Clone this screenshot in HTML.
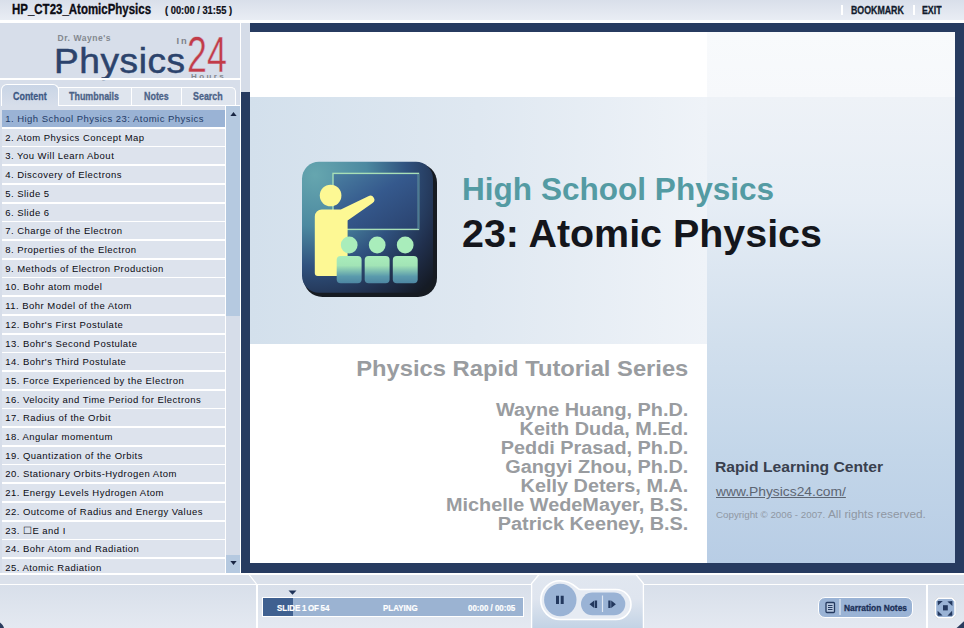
<!DOCTYPE html>
<html><head><meta charset="utf-8"><title>HP_CT23_AtomicPhysics</title>
<style>
html,body{margin:0;padding:0}
body{width:964px;height:628px;overflow:hidden;position:relative;background:#d7deea;font-family:"Liberation Sans",sans-serif;}
div,span,svg{position:absolute;box-sizing:border-box}
.nar{display:inline-block;transform-origin:0 50%;white-space:nowrap;font-weight:bold}
#topbar{left:0;top:0;width:964px;height:20px;background:linear-gradient(#d9dfea,#e9edf4)}
#topline{left:0;top:20px;width:964px;height:3px;background:#fff}
#title{left:12px;top:2px;font-size:13.8px;color:#0c0c14;transform:scaleX(.832);-webkit-text-stroke:.3px #0c0c14}
#time{left:165px;top:3.5px;font-size:11px;color:#0c0c14;transform:scaleX(.85);-webkit-text-stroke:.2px #0c0c14}
#bm{left:851px;top:4px;font-size:11px;color:#111a2c;transform:scaleX(.8);-webkit-text-stroke:.3px #111a2c}
#ex{left:922px;top:4px;font-size:11px;color:#111a2c;transform:scaleX(.8);-webkit-text-stroke:.3px #111a2c}
.vsep{width:2px;height:10px;top:5px;background:#fff}
/* sidebar */
#side{left:0;top:23px;width:240px;height:550px;background:#d7deea}
#sideR{left:240px;top:23px;width:1px;height:550px;background:#fff}
#strip{left:241px;top:23px;width:8.5px;height:69px;background:#d5dce8}
#logoline{left:0;top:78px;width:240px;height:2px;background:#fff}
/* logo */
#lg1{left:57.5px;top:32.5px;font-size:8.5px;font-weight:bold;color:#83888f;letter-spacing:.55px;white-space:nowrap}
#lg2{left:54.3px;top:41.1px;font-size:34.2px;color:#2c436c;letter-spacing:.5px;white-space:nowrap;line-height:40px;-webkit-text-stroke:.5px #2c436c;transform:scaleX(1.085);transform-origin:0 50%}
#lg3{left:176.6px;top:35.5px;font-size:9.3px;font-weight:bold;color:#7d828a;letter-spacing:1.7px}
#lg4{left:187.4px;top:29.3px;font-size:50.5px;color:#c23c48;line-height:52px;transform:scaleX(.71);transform-origin:0 50%;white-space:nowrap;-webkit-text-stroke:.45px #d7deea}
#lg5{left:191px;top:72.2px;font-size:8px;font-weight:bold;color:#83888f;letter-spacing:2.4px;height:5.8px;overflow:hidden;line-height:10px;white-space:nowrap}
/* tabs */
.tab{top:87px;height:18px;border:1px solid #fff;border-bottom:0;background:#dfe5ee}
.tab span{top:2px;font-size:11px;color:#4b6288;transform:scaleX(.81);-webkit-text-stroke:.3px #4b6288}
#tab1{left:1px;top:84px;width:58px;height:22px;border-radius:6px 6px 0 0;background:linear-gradient(#c9d5e6,#d7deea);z-index:2}
#tab1 span{top:5px;left:11px;color:#3c5884;-webkit-text-stroke:.3px #3c5884}
#tab2{left:58px;width:74px}
#tab3{left:131px;width:51px}
#tab4{left:181px;width:55px;border-radius:0 5px 0 0}
/* frame */
#frame{left:241px;top:23px;width:723px;height:550px;background:#273b60}
#slide{left:249.5px;top:32px;width:705.5px;height:531.2px;background:#fff;overflow:hidden}
/* list */
.row{left:2px;width:223px;height:17px;background:#dde3ed;font-size:9.5px;letter-spacing:.47px;color:#0a0a12;white-space:nowrap;overflow:hidden}
.row span{left:3.2px;top:3px;line-height:11px}
.row.sel{background:#9ab3d5;color:#1f3a66}
#listbg{left:2px;top:106px;width:223px;height:467px;background:#fff}
#listtop{left:2px;top:106px;width:223px;height:4px;background:#d7deea}
#hline105{left:59px;top:105px;width:182px;height:1px;background:#fff}
#vline225{left:225px;top:105px;width:1px;height:468px;background:#fff}
#sb{left:226px;top:106px;width:14px;height:467px;background:#d6dde9}
#sbt{left:226px;top:106px;width:14px;height:209.5px;background:#b5c9e0}
#sbd{left:226px;top:555px;width:14px;height:18px;background:#b5c9e0}
#sbu1{left:229px;top:110px}
#sbd1{left:229px;top:559px}
/* slide */
#band{left:0;top:65px;width:457.5px;height:247px;background:linear-gradient(90deg,#d3e0ec,#dfe8f1 50%,#eff3f8)}
#rcol{left:457.5px;top:0;width:248px;height:531px;background:linear-gradient(#f8fafc 0,#f6f8fb 65px,#eef2f7 65px,#e6edf5 170px,#d1dfed 313px,#c3d6e9 420px,#b8cde5 531px)}
#rcolw{left:457.5px;top:313px;width:248px;height:218px;background:#fff}
#t1{left:212px;top:140px;font-size:31px;font-weight:bold;color:#549ba3;white-space:nowrap;line-height:36px;transform:scaleX(1.018);transform-origin:0 50%}
#t2{left:212px;top:180px;font-size:38px;font-weight:bold;color:#14161c;white-space:nowrap;line-height:44px;transform:scaleX(1.037);transform-origin:0 50%}
#t3{right:267px;top:324px;font-size:22.2px;font-weight:bold;color:#999ca0;white-space:nowrap;line-height:26px;transform:scaleX(1.07);transform-origin:100% 50%}
#names{right:267px;top:367.5px;font-size:18.8px;font-weight:bold;color:#999ca0;white-space:nowrap;line-height:19px;text-align:right;transform:scaleX(1.057);transform-origin:100% 50%}
#r1{left:465.5px;top:426px;font-size:15px;font-weight:bold;color:#39404e;white-space:nowrap;line-height:18px;transform:scaleX(1.045);transform-origin:0 50%}
#r2{left:466px;top:452px;font-size:13.3px;color:#5d6673;white-space:nowrap;line-height:16px;text-decoration:underline;transform:scaleX(1.04);transform-origin:0 50%}
#r3{left:466px;top:475px;font-size:9.5px;color:#8f97a3;white-space:nowrap;line-height:14px;transform:scaleX(1.028);transform-origin:0 50%}
#r3 b{font-weight:normal;font-size:11.5px}
/* bottom */
#bline1{left:0;top:573px;width:964px;height:2px;background:#fff}
#bline2{left:0;top:584px;width:964px;height:1px;background:#fff}
#bband{left:0;top:575px;width:964px;height:10px;background:#dbe1eb}
#bpanel{left:0;top:585px;width:964px;height:43px;background:linear-gradient(#d8dfea,#e4e9f1)}
#bv1{left:256px;top:584px;width:1.6px;height:44px;background:#fff}
#bv2{left:926px;top:585px;width:2px;height:43px;background:#fff}
#pbar{left:262px;top:597px;width:262px;height:20px;border:1px solid #fff;background:#9bb3d2}
#pdone{left:0;top:0;width:30px;height:18px;background:#3f6090}
.pt{top:4px;font-size:9.7px;color:#fff;transform:scaleX(.82);-webkit-text-stroke:.2px #fff}
#nn{left:818px;top:597px;width:95px;height:21px;border:1.5px solid #fff;border-radius:7px;background:#9ab3d5}
#nn span{left:24.5px;top:4px;font-size:9.6px;color:#1a2f57;transform:scaleX(.875);-webkit-text-stroke:.3px #1a2f57}

#ctl{left:525px;top:570px}
#diag{left:246px;top:572px}
#mark{left:287px;top:589px}
#fs{left:932px;top:595px}
#nnicon{left:6px;top:3px}
#nnsep{left:20px;top:1px;width:1.5px;height:16px;background:#c5d3e6}
#grip{left:952px;top:616px}
#gripl{left:0;top:616px}

</style></head><body>
<div id="topbar"></div><div id="topline"></div>
<span id="title" class="nar">HP_CT23_AtomicPhysics</span>
<span id="time" class="nar">( 00:00 / 31:55 )</span>
<div class="vsep" style="left:841px"></div><div class="vsep" style="left:913px"></div>
<span id="bm" class="nar">BOOKMARK</span><span id="ex" class="nar">EXIT</span>

<div id="frame"></div>
<div id="strip"></div>
<div id="slide">
 <div id="band"></div>
 <div id="rcolw"></div>
 <div id="rcol"></div>
 <svg id="icon" style="left:49px;top:127px" width="140" height="140" viewBox="0 0 140 140">
  <defs>
   <radialGradient id="ig" cx=".1" cy=".1" r="1.2" gradientUnits="objectBoundingBox"><stop offset="0" stop-color="#66a6af"/><stop offset=".33" stop-color="#4c89a0"/><stop offset=".58" stop-color="#30527f"/><stop offset=".82" stop-color="#202f4c"/><stop offset="1" stop-color="#151b25"/></radialGradient>
   <linearGradient id="sg" x1="0" y1="0" x2="0" y2="1"><stop offset="0" stop-color="#a9edbb"/><stop offset=".35" stop-color="#a2e4b6"/><stop offset=".75" stop-color="#5a9aac"/><stop offset="1" stop-color="#4d86a2"/></linearGradient>
   <linearGradient id="bg" x1="0" y1="0" x2="1" y2="1"><stop offset="0" stop-color="#4a7fa0"/><stop offset=".45" stop-color="#35598d"/><stop offset="1" stop-color="#2a426e"/></linearGradient>
  </defs>
  <rect x="4.5" y="4.5" width="133.5" height="133.5" rx="19" fill="#161b22"/>
  <rect x="3" y="2.7" width="131" height="131" rx="17" fill="url(#ig)"/>
  <rect x="34" y="14.4" width="85.5" height="56" fill="url(#bg)" stroke="#a8dfb7" stroke-width="1.4"/>
  <path d="M119.5 15V70" stroke="#4c7a94" stroke-width="1.6"/>
  <circle cx="31.6" cy="36.5" r="10.8" fill="#fdf894"/>
  <path d="M15.8 114V57.5a7 7 0 0 1 7-7h19l27.5-13.3a4 4 0 0 1 4 7L48.6 61.5v52.5a3 3 0 0 1-3 3H18.8a3 3 0 0 1-3-3z" fill="#fdf894"/>
  <g fill="#a9edbb"><circle cx="50.2" cy="86" r="8.4"/><circle cx="78.2" cy="86" r="8.4"/><circle cx="106.2" cy="86" r="8.4"/></g>
  <g fill="url(#sg)"><rect x="37.7" y="96.9" width="24.9" height="27.4" rx="4"/><rect x="65.7" y="96.9" width="24.9" height="27.4" rx="4"/><rect x="93.8" y="96.9" width="24.9" height="27.4" rx="4"/></g>
 </svg>
 <span id="t1">High School Physics</span>
 <span id="t2">23: Atomic Physics</span>
 <span id="t3">Physics Rapid Tutorial Series</span>
 <div id="names">Wayne Huang, Ph.D.<br>Keith Duda, M.Ed.<br>Peddi Prasad, Ph.D.<br>Gangyi Zhou, Ph.D.<br>Kelly Deters, M.A.<br>Michelle WedeMayer, B.S.<br>Patrick Keeney, B.S.</div>
 <span id="r1">Rapid Learning Center</span>
 <span id="r2">www.Physics24.com/</span>
 <span id="r3">Copyright © 2006 - 2007. <b>All rights reserved.</b></span>
</div>

<div id="side"></div><div id="sideR"></div>
<span id="lg1">Dr. Wayne's</span>
<span id="lg2">Physics</span>
<span id="lg3">In</span>
<span id="lg4">24</span>
<span id="lg5">Hours</span>
<div id="logoline"></div>
<div id="tab2" class="tab"><span class="nar" style="left:10px">Thumbnails</span></div>
<div id="tab3" class="tab"><span class="nar" style="left:12px">Notes</span></div>
<div id="tab4" class="tab"><span class="nar" style="left:11px">Search</span></div>
<div id="hline105"></div>
<div id="tab1" class="tab"><span class="nar">Content</span></div>
<div id="listbg"></div><div id="listtop"></div>
<div class="row sel" style="top:110.00px"><span>1. High School Physics 23: Atomic Physics</span></div>
<div class="row" style="top:128.71px"><span>2. Atom Physics Concept Map</span></div>
<div class="row" style="top:147.42px"><span>3. You Will Learn About</span></div>
<div class="row" style="top:166.12px"><span>4. Discovery of Electrons</span></div>
<div class="row" style="top:184.83px"><span>5. Slide 5</span></div>
<div class="row" style="top:203.54px"><span>6. Slide 6</span></div>
<div class="row" style="top:222.25px"><span>7. Charge of the Electron</span></div>
<div class="row" style="top:240.96px"><span>8. Properties of the Electron</span></div>
<div class="row" style="top:259.67px"><span>9. Methods of Electron Production</span></div>
<div class="row" style="top:278.38px"><span>10. Bohr atom model</span></div>
<div class="row" style="top:297.08px"><span>11. Bohr Model of the Atom</span></div>
<div class="row" style="top:315.79px"><span>12. Bohr's First Postulate</span></div>
<div class="row" style="top:334.50px"><span>13. Bohr's Second Postulate</span></div>
<div class="row" style="top:353.21px"><span>14. Bohr's Third Postulate</span></div>
<div class="row" style="top:371.92px"><span>15. Force Experienced by the Electron</span></div>
<div class="row" style="top:390.62px"><span>16. Velocity and Time Period for Electrons</span></div>
<div class="row" style="top:409.33px"><span>17. Radius of the Orbit</span></div>
<div class="row" style="top:428.04px"><span>18. Angular momentum</span></div>
<div class="row" style="top:446.75px"><span>19. Quantization of the Orbits</span></div>
<div class="row" style="top:465.46px"><span>20. Stationary Orbits-Hydrogen Atom</span></div>
<div class="row" style="top:484.17px"><span>21. Energy Levels Hydrogen Atom</span></div>
<div class="row" style="top:502.88px"><span>22. Outcome of Radius and Energy Values</span></div>
<div class="row" style="top:521.58px"><span>23. ☐E and I</span></div>
<div class="row" style="top:540.29px"><span>24. Bohr Atom and Radiation</span></div>
<div class="row" style="top:559.00px"><span>25. Atomic Radiation</span></div>
<div id="vline225"></div>
<div id="sb"></div><div id="sbt"></div><div id="sbd"></div>
<svg id="sbu1" width="10" height="8" viewBox="0 0 10 8"><path d="M4.5 2L7.6 5.9H1.4z" fill="#1a2744"/></svg>
<svg id="sbd1" width="10" height="8" viewBox="0 0 10 8"><path d="M4.5 6L7.6 2.1H1.4z" fill="#1a2744"/></svg>

<div id="bline1"></div>
<div id="bband"></div><div id="bpanel"></div>
<div id="bline2"></div>
<div id="bv1"></div><div id="bv2"></div>
<div id="pbar"><div id="pdone"></div>
 <span class="nar pt" style="left:14px;word-spacing:-.8px">SLIDE 1 OF 54</span>
 <span class="nar pt" style="left:120px">PLAYING</span>
 <span class="nar pt" style="left:205px">00:00 / 00:05</span>
</div>
<div id="nn"><svg id="nnicon" width="11" height="13" viewBox="0 0 11 13"><rect x="1" y="1.5" width="8.5" height="10" rx="1" fill="#b7c8e0" stroke="#24395f" stroke-width="1.3"/><path d="M3 4.5h4.5M3 6.5h4.5M3 8.5h4.5" stroke="#24395f" stroke-width="1"/></svg><div id="nnsep"></div><span class="nar">Narration Notes</span></div>
<svg id="diag" width="14" height="16" viewBox="0 0 14 16"><path d="M3 2.5L10.5 12" stroke="#fff" stroke-width="1.2" fill="none"/></svg>
<svg id="mark" width="12" height="8" viewBox="0 0 12 8"><path d="M1.5 1.5h8L5.5 5.8z" fill="#1f3358"/></svg>
<svg id="ctl" width="125" height="58" viewBox="0 0 125 58">
 <defs><linearGradient id="cg" x1="0" y1="0" x2="0" y2="1"><stop offset="0" stop-color="#e1e7f0"/><stop offset=".45" stop-color="#dfe5ef"/><stop offset="1" stop-color="#c3d3e5"/></linearGradient></defs>
 <path d="M6.6 58V13.5L14 4.5H111L118.4 13.5V58z" fill="url(#cg)"/>
 <path d="M6.6 58V13.5L14 4.5H111L118.4 13.5V58" fill="none" stroke="#fff" stroke-width="1.3"/>
 <path d="M35.2 10.7a19.4 19.4 0 1 0 0 38.8H91a15 15 0 0 0 0-30H55c-3 0-7-8.8-19.8-8.8z" fill="#e6ebf3" stroke="#fff" stroke-width="1.6"/>
 <circle cx="35.3" cy="30" r="16.2" fill="#9ab3d5"/>
 <rect x="56" y="22.6" width="44.3" height="22.6" rx="11.3" fill="#9ab3d5"/>
 <path d="M31 25.8h3v8.2h-3zM35.7 25.8h3v8.2h-3z" fill="#23385e"/>
 <path d="M64.5 34.2l4.7-3.7v7.4zM69.8 30.5h2.3v7.4h-2.3z" fill="#23385e"/>
 <path d="M90.9 34.2l-4.7-3.7v7.4zM85.6 30.5h-2.3v7.4h2.3z" fill="#23385e"/>
 <path d="M77.5 25.5v16.5" stroke="#dfe7f2" stroke-width="1.2"/>
</svg>
<svg id="fs" width="28" height="28" viewBox="0 0 28 28">
 <path d="M6.4 3.2h13.6l3 3v13.6l-3 3h-13.6l-3-3v-13.6z" fill="#9ab3d5" stroke="#d0d3d8" stroke-width="2.2"/>
 <path d="M6.4 3.2h13.6l3 3v13.6l-3 3h-13.6l-3-3v-13.6z" fill="#9ab3d5" stroke="#fff" stroke-width="1.5"/>
 <g fill="#23385e"><rect x="11" y="10.2" width="4.8" height="5.2"/>
 <path d="M5.6 6.1h5.2L5.9 10.6zM20.4 6.1v4.8L15.4 6.4zM5.6 20.7v-5L10.6 20.4zM20.4 20.7h-5L20.1 15.7z"/></g>
</svg>
<svg id="grip" width="12" height="12" viewBox="0 0 12 12"><path d="M12 5.2L4.6 12h7.4z" fill="#2a3c5e"/></svg>
<svg id="gripl" width="8" height="12" viewBox="0 0 8 12"><path d="M0 6.5C2 8 3.5 10 4 12H0z" fill="#2a3c5e"/></svg>

</body></html>
